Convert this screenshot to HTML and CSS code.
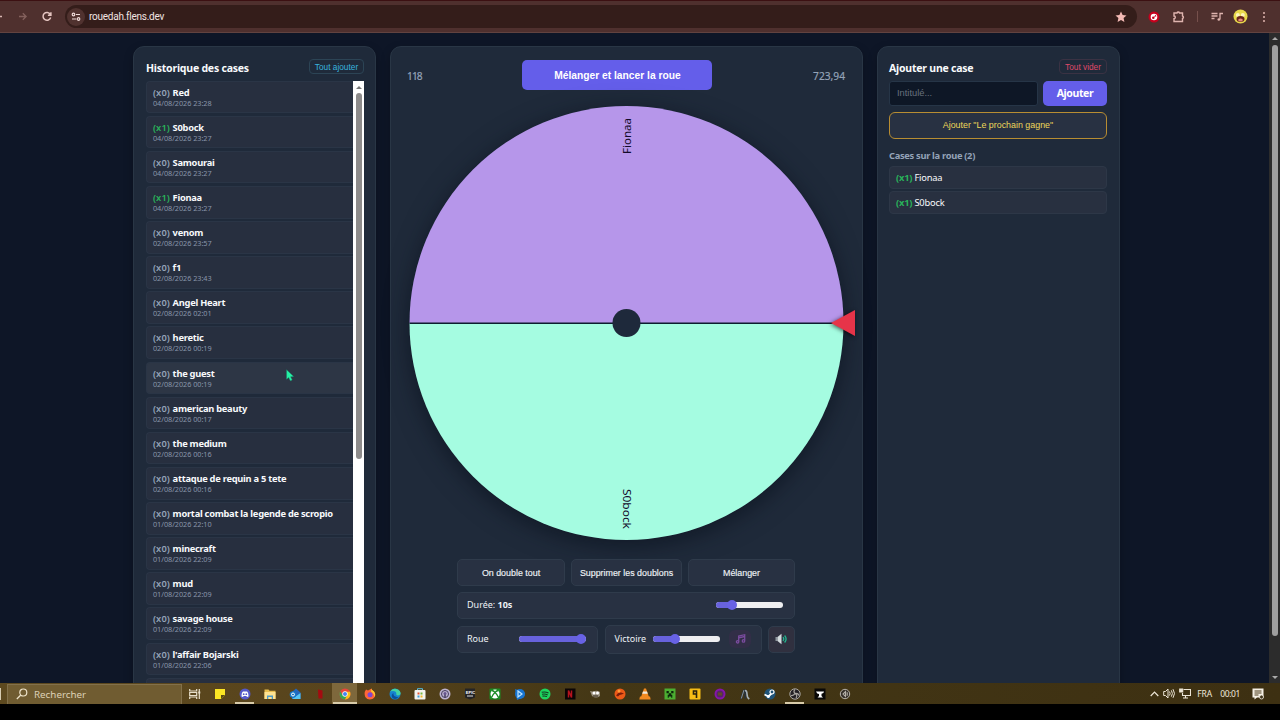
FILE: index.html
```
<!DOCTYPE html>
<html lang="fr">
<head>
  <meta charset="UTF-8">
  <title>rouedah.flens.dev</title>
  <link rel="stylesheet" href="styles.css">
</head>
<body>

<header class="browser-bar">
  <svg class="nav-icons" width="60" height="33" viewBox="0 0 60 33" fill="none" stroke-width="1.3">
    <path d="M-4 16.5H2" stroke="#d9b7b2"/>
    <path d="M19 16.5h7M22.800 13.200l3.300 3.300-3.300 3.300" stroke="#83605c"/>
    <path d="M50.300 14.300A3.900 3.900 0 1 0 50.700 17.500M50.900 12.200v3h-3" stroke="#e5c5c1" stroke-width="1.500"/>
  </svg>
  <div class="address">
    <span class="site-info">
      <svg width="10" height="10" viewBox="0 0 10 10" fill="none" stroke="#f0dcda" stroke-width="1.200">
        <circle cx="2.500" cy="2.500" r="1.300"/><path d="M5 2.500h4M1 7h4"/><circle cx="7.500" cy="7" r="1.300"/>
      </svg>
    </span>
    <span class="url">rouedah.flens.dev</span>
    <svg class="star" width="12" height="12" viewBox="0 0 12 12"><path fill="#f3b9b4" d="M6 .5l1.600 3.500 3.900.4-2.900 2.600.8 3.900L6 8.900l-3.400 2 .8-3.900L.5 4.400l3.900-.4z"/></svg>
  </div>
  <div class="extensions">
    <svg width="12" height="12" viewBox="0 0 12 12"><circle cx="6" cy="6" r="5.500" fill="#c7001d"/><circle cx="6" cy="6" r="3.300" fill="#fff"/><path d="M6 6l1.500-2.300 1 1.500z" fill="#c7001d"/><circle cx="5.300" cy="6.800" r="1.300" fill="#c7001d"/></svg>
    <svg width="13" height="13" viewBox="0 0 13 13" fill="none" stroke="#dfb4af" stroke-width="1.400"><path d="M2 3h3a1.300 1.300 0 0 1 2.500 0h3v3a1.300 1.300 0 0 1 0 2.500v3H2V8.700a1.300 1.300 0 0 0 0-2.700z"/></svg>
    <span class="divider"></span>
    <svg width="12" height="12" viewBox="0 0 12 12" fill="none" stroke="#dfb4af" stroke-width="1.300"><path d="M.5 2.500h6M.5 5h6M.5 7.500h3M9 8.500V2.500h3"/><circle cx="7.800" cy="8.500" r="1.300" fill="#dfb4af" stroke="none"/></svg>
    <svg class="avatar" width="15" height="15" viewBox="0 0 15 15"><circle cx="7.500" cy="7.500" r="7" fill="#e8d94a"/><circle cx="4.800" cy="6" r="2" fill="#fff5bb"/><circle cx="9.800" cy="6" r="2" fill="#fff5bb"/><ellipse cx="7.500" cy="10" rx="4" ry="3" fill="#68251c"/><ellipse cx="7.500" cy="11" rx="2.300" ry="1.500" fill="#e48a7e"/></svg>
    <svg width="4" height="12" viewBox="0 0 4 12" fill="#dfb4af"><circle cx="2" cy="2" r="1"/><circle cx="2" cy="6" r="1"/><circle cx="2" cy="10" r="1"/></svg>
  </div>
</header>

<div class="viewport">
  <main class="page">
    <section class="panel history">
      <div class="panel-head">
        <h2>Historique des cases</h2>
        <button class="btn-small btn-blue">Tout ajouter</button>
      </div>
      <div class="history-scroll">
        <ul class="history-list">
          <li><b><i>(x0)</i> Red</b><time>04/08/2026 23:28</time></li>
          <li><b><i class="on">(x1)</i> S0bock</b><time>04/08/2026 23:27</time></li>
          <li><b><i>(x0)</i> Samourai</b><time>04/08/2026 23:27</time></li>
          <li><b><i class="on">(x1)</i> Fionaa</b><time>04/08/2026 23:27</time></li>
          <li><b><i>(x0)</i> venom</b><time>02/08/2026 23:57</time></li>
          <li><b><i>(x0)</i> f1</b><time>02/08/2026 23:43</time></li>
          <li><b><i>(x0)</i> Angel Heart</b><time>02/08/2026 02:01</time></li>
          <li><b><i>(x0)</i> heretic</b><time>02/08/2026 00:19</time></li>
          <li class="hover"><b><i>(x0)</i> the guest</b><time>02/08/2026 00:19</time></li>
          <li><b><i>(x0)</i> american beauty</b><time>02/08/2026 00:17</time></li>
          <li><b><i>(x0)</i> the medium</b><time>02/08/2026 00:16</time></li>
          <li><b><i>(x0)</i> attaque de requin a 5 tete</b><time>02/08/2026 00:16</time></li>
          <li><b><i>(x0)</i> mortal combat la legende de scropio</b><time>01/08/2026 22:10</time></li>
          <li><b><i>(x0)</i> minecraft</b><time>01/08/2026 22:09</time></li>
          <li><b><i>(x0)</i> mud</b><time>01/08/2026 22:09</time></li>
          <li><b><i>(x0)</i> savage house</b><time>01/08/2026 22:09</time></li>
          <li><b><i>(x0)</i> l'affair Bojarski</b><time>01/08/2026 22:06</time></li>
          <li></li>
        </ul>
        <div class="list-scrollbar"><span class="arrow-up"></span><span class="thumb"></span></div>
      </div>
    </section>

    <section class="panel wheel-panel">
      <div class="wheel-top">
        <span class="count">118</span>
        <button class="btn-primary btn-spin">Mélanger et lancer la roue</button>
        <span>723,94</span>
      </div>
      <svg class="wheel" width="472" height="458" viewBox="0 0 472 458">
        <circle class="wheel-shadow" cx="235.500" cy="229" r="217"/>
        <path d="M18.500 229a217 217 0 0 1 434 0z" fill="#b696ea"/>
        <path d="M18.500 229a217 217 0 0 0 434 0z" fill="#a5fce1"/>
        <path d="M18.500 229.300h434" stroke="#0c1d2f" stroke-width="1.400"/>
        <circle cx="235.500" cy="229" r="14" fill="#1e293b"/>
        <text class="wheel-text" transform="translate(239.500 60) rotate(-90)" textLength="36" lengthAdjust="spacingAndGlyphs">Fionaa</text>
        <text class="wheel-text" transform="translate(231.500 395) rotate(90)" textLength="40" lengthAdjust="spacingAndGlyphs">S0bock</text>
        <path class="pointer" d="M440 229l24-13v26z" fill="#e63449"/>
      </svg>
      <div class="controls">
        <div class="row row-buttons">
          <button class="box">On double tout</button>
          <button class="box">Supprimer les doublons</button>
          <button class="box">Mélanger</button>
        </div>
        <div class="box duration">
          <span>Durée: <b>10s</b></span>
          <div class="slider"><div class="fill" style="width: 24%"></div></div>
        </div>
        <div class="row row-volume">
          <div class="box">
            <span>Roue</span>
            <div class="slider"><div class="fill" style="width: 93%"></div></div>
          </div>
          <div class="box victory">
            <span>Victoire</span>
            <div class="slider"><div class="fill" style="width: 33%"></div></div>
            <div class="music">
              <svg width="11" height="11" viewBox="0 0 11 11" fill="none" stroke="#7a4b9e" stroke-width="1.300"><path d="M3.700 8.500V3l6-1.300v5.800M3.700 4.800l6-1.300"/><circle cx="2.600" cy="8.800" r="1.200"/><circle cx="8.500" cy="7.900" r="1.200"/></svg>
            </div>
          </div>
          <div class="box speaker">
            <svg width="13" height="12" viewBox="0 0 13 12"><path d="M.5 4h2v4h-2z" fill="#8d969d"/><path d="M2.500 4l4-3.300v10.600L2.500 8z" fill="#d5dcdf"/><path d="M8 4.200q1.500 1.800 0 3.600M9.600 2.500q3 3.500 0 7" fill="none" stroke="#23b58e" stroke-width="1.300"/></svg>
          </div>
        </div>
      </div>
    </section>

    <section class="panel add-panel">
      <div class="panel-head">
        <h2>Ajouter une case</h2>
        <button class="btn-small btn-red">Tout vider</button>
      </div>
      <div class="add-form">
        <input type="text" placeholder="Intitulé...">
        <button class="btn-primary">Ajouter</button>
      </div>
      <button class="btn-next">Ajouter "Le prochain gagne"</button>
      <h3>Cases sur la roue (2)</h3>
      <ul class="case-list">
        <li><b>(x1)</b> Fionaa</li>
        <li><b>(x1)</b> S0bock</li>
      </ul>
    </section>
  </main>
  <div class="page-scrollbar"><span class="arrow-up"></span><span class="thumb"></span><span class="arrow-down"></span></div>
</div>

<footer class="taskbar">
  <div class="start"></div>
  <div class="search">
    <svg width="12" height="12" viewBox="0 0 12 12" fill="none" stroke="#eee3ca" stroke-width="1.200"><circle cx="7.300" cy="4.500" r="3.500"/><path d="M4.800 7L.8 11"/></svg>
    <span>Rechercher</span>
  </div>
  <div class="apps">
    <div><svg viewBox="0 0 12 12" fill="none" stroke="#e8e0cc" stroke-width="1.200"><path d="M.7 1v2h7V1M.7 11V9h7v2M.7 4.500h7v3h-7zM10.300 1v10"/><path d="M9.300 4.500h2" stroke-width="2"/></svg></div>
    <div><svg viewBox="0 0 12 12"><path d="M1 1h10v6l-4 4H1z" fill="#fbe524"/><path d="M7 11V7h4z" fill="#5b4a11"/></svg></div>
    <div class="open"><svg viewBox="0 0 12 12"><circle cx="6" cy="6" r="5.500" fill="#5559c9"/><path d="M2.500 8.500Q2.500 4.500 4 3.500h4q1.500 1 1.500 5L8 9l-.7-1H4.700L4 9z" fill="#fff"/><circle cx="4.700" cy="6.200" r=".9" fill="#5559c9"/><circle cx="7.300" cy="6.200" r=".9" fill="#5559c9"/></svg></div>
    <div><svg viewBox="0 0 12 12"><path d="M.5 1.500h4l1 1.300h6V11H.5z" fill="#e8bf50"/><path d="M.5 4h11v7H.5z" fill="#ffe391"/><path d="M3 11V7.500h6V11H7.700V9H4.300v2z" fill="#4d9bc9"/></svg></div>
    <div><svg viewBox="0 0 12 12"><path d="M3 4l4-3.500 4.500 4V11H3z" fill="#2467bd"/><path d="M3 11l8.500-6v6z" fill="#55c5f5"/><circle cx="4" cy="6.500" r="3.300" fill="#1877c9"/><circle cx="4" cy="6.500" r="1.500" fill="none" stroke="#fff"/></svg></div>
    <div><svg viewBox="0 0 12 12"><path d="M4 1.500l4.500 1v8H4.500z" fill="#a50b10"/></svg></div>
    <div class="open active"><svg viewBox="0 0 12 12"><circle cx="6" cy="6" r="5.500" fill="#e7453b"/><path d="M1.200 3.300A5.500 5.500 0 0 0 6 11.500L8.200 7 3.500 7z" fill="#35a853"/><path d="M6 11.500A5.500 5.500 0 0 0 11 3.800H6L8.300 7z" fill="#fbc116"/><circle cx="6" cy="6" r="2.700" fill="#fff"/><circle cx="6" cy="6" r="2" fill="#4285f4"/></svg></div>
    <div><svg viewBox="0 0 12 12"><path d="M2 1.500l2 1Q6 1.500 7.500.5q0 1.500 2.500 3Q13 8 9 10.800 4 13 1.300 9-.4 5 2 1.500z" fill="#ff6638"/><path d="M7.500.5q0 1.500 2.500 3 2 3 .5 5.500Q10 5 7 3.500z" fill="#ffc72c"/><circle cx="6" cy="6.800" r="2.500" fill="#8048cf"/></svg></div>
    <div><svg viewBox="0 0 12 12"><circle cx="6" cy="6" r="5.500" fill="#1583cf"/><path d="M1 4Q4-1 9 1.500q3.500 2 2.300 5-2 1.500-4 .6Q8 3 4 3q-2 0-3 1z" fill="#43d2a4"/><path d="M4.500 5q-1 3.500 5 4.500-3 2.500-6 .5Q1.500 7 4.500 5z" fill="#0b4f99"/></svg></div>
    <div><svg viewBox="0 0 12 12"><rect x=".5" y="2" width="11" height="9.500" rx="1" fill="#f4f4ef"/><path d="M3.500 2V.7h5V2" fill="none" stroke="#58bde0"/><path d="M3.500 4.500h2v2h-2z" fill="#e95431"/><path d="M6.500 4.500h2v2h-2z" fill="#77b843"/><path d="M3.500 7.500h2v2h-2z" fill="#3b9fdd"/><path d="M6.500 7.500h2v2h-2z" fill="#f4b92b"/></svg></div>
    <div><svg viewBox="0 0 12 12"><circle cx="6" cy="6" r="5.500" fill="#bcb2cf"/><circle cx="6" cy="6" r="3.500" fill="none" stroke="#453c60"/><path d="M6 9.500V6" stroke="#453c60" stroke-width="1.500"/><circle cx="6" cy="5.500" r="1.500" fill="#67558d"/></svg></div>
    <div><svg viewBox="0 0 12 12"><path d="M1 .5h10v9L6 11.500 1 9.500z" fill="#242426"/><text x="1.800" y="6" class="epic">EPIC</text><path d="M3 8h6" stroke="#ddd"/></svg></div>
    <div><svg viewBox="0 0 12 12"><rect x=".5" y=".5" width="11" height="11" rx="1" fill="#198b23"/><circle cx="6" cy="6" r="4.500" fill="#fff"/><path d="M2.500 9.500Q4 6 6 4.500 8 6 9.500 9.500M3 2.500Q5 3 6 4.500 7 3 9 2.500" fill="none" stroke="#198b23" stroke-width="1.300"/></svg></div>
    <div><svg viewBox="0 0 12 12"><path d="M1 1l10 4-1 4-7 3z" fill="#1774d1"/><circle cx="6" cy="6" r="5" fill="#1774d1"/><path d="M4 3v6l4-3z" fill="none" stroke="#bde4ff" stroke-width="1.200"/></svg></div>
    <div><svg viewBox="0 0 12 12"><circle cx="6" cy="6" r="5.500" fill="#1ed45f"/><path d="M2.700 4.300q3.500-1 6.800.7M3 6.300q3-.8 5.700.6M3.500 8.100q2.500-.5 4.500.5" fill="none" stroke="#123c21" stroke-width="1.100"/></svg></div>
    <div><svg viewBox="0 0 12 12"><path d="M1 .5h10.500v11H1z" fill="#0b0506"/><path d="M4.500 9.500v-7l3 7v-7" fill="none" stroke="#b5121d" stroke-width="1.500"/></svg></div>
    <div><svg viewBox="0 0 12 12"><path d="M1 3l3 .5q4-1.500 7 .5v4q-4 3-8 0z" fill="#988f7c"/><circle cx="5" cy="5" r="1.500" fill="#fff"/><circle cx="8.500" cy="5" r="1.500" fill="#fff"/><path d="M4 8h5" stroke="#392e23"/></svg></div>
    <div><svg viewBox="0 0 12 12"><circle cx="6" cy="6" r="5.500" fill="#ed5a18"/><path d="M2 7.500q2-3.500 5-3l3 1-2.500 1q-2 0-3.500 2z" fill="#7e1c0a"/><circle cx="5" cy="3" r="1.500" fill="#ff9b38"/></svg></div>
    <div><svg viewBox="0 0 12 12"><path d="M5 .5h2L10 9H2z" fill="#f28920"/><path d="M4 3.500h4l.8 2.300H3.200z" fill="#eee8dc"/><path d="M1 8.500h10l.7 3H.3z" fill="#f28920"/></svg></div>
    <div><svg viewBox="0 0 12 12"><path d="M.5.500h11v11H.5z" fill="#4caf32"/><path d="M2.500 3h2.300v2.300H2.500zM7.200 3h2.300v2.300H7.200zM4.800 5.300h2.400v1.400h1.100v3H7.200V8.500H4.800v1.200H3.700v-3h1.100z" fill="#0c260a"/></svg></div>
    <div><svg viewBox="0 0 12 12"><rect x=".5" y=".5" width="11" height="11" rx="1" fill="#f7bd16"/><path d="M7.500 10V3h-3v3h3" fill="none" stroke="#2b230d" stroke-width="1.600"/></svg></div>
    <div><svg viewBox="0 0 12 12"><circle cx="6" cy="6" r="4.500" fill="#552568" stroke="#8615aa" stroke-width="2"/><path d="M4 4.500h4v3H4z" fill="#654b28"/></svg></div>
    <div><svg viewBox="0 0 12 12" fill="none"><path d="M2 11l2.800-8.500h1.400v8" stroke="#27323c" stroke-width="1.800"/><path d="M2.300 10.500L5 2" stroke="#87939c"/><path d="M6 2.500q2 0 2 3.500t2.300 5" stroke="#a5b0b8" stroke-width="1.600"/></svg></div>
    <div><svg viewBox="0 0 12 12"><circle cx="6" cy="6" r="5.500" fill="#1f5378"/><path d="M.5 6.500l4 2L8 5" stroke="#fff" stroke-width="1.800" fill="none"/><circle cx="8" cy="4" r="2" fill="#1f5378" stroke="#fff" stroke-width="1.200"/><circle cx="4.300" cy="8.500" r="1.500" fill="#fff"/></svg></div>
    <div class="open"><svg viewBox="0 0 12 12" fill="none" stroke="#aaa6a0"><circle cx="6" cy="6" r="5.200" fill="#242125"/><path d="M6 1.500q-2 2 0 4 3-.5 4 2M6 5.500q-1.500 2.500-4 2M6 5.500q3 2 1 4.500" stroke-width="1.200"/></svg></div>
    <div><svg viewBox="0 0 12 12"><path d="M.5.500h11v11H.5z" fill="#090807"/><path d="M2 3.500h8q0 2-2.500 2.300V8L9 9.500H3.500L5 8V6Q3 6 2 3.500z" fill="#fff"/></svg></div>
    <div><svg viewBox="0 0 12 12" fill="none" stroke="#b5b1aa"><circle cx="6" cy="6" r="4.700" fill="#35302b"/><path d="M6.500 3.500v5L4 6zM8.200 4.300v3.400" stroke-width="1.100"/></svg></div>
  </div>
  <div class="tray">
    <svg width="9" height="6" viewBox="0 0 9 6" fill="none" stroke="#ece5d6" stroke-width="1.200"><path d="M.7 5l3.800-4 3.800 4"/></svg>
    <svg width="12" height="11" viewBox="0 0 12 11" fill="none" stroke="#ece5d6"><path d="M.7 3.500h1.800L5 1v9L2.500 7.500H.7zM6.500 3.500q1.300 2 0 4M8.300 2.300q2.200 3.200 0 6.400M10 1.200q3 4.300 0 8.600"/></svg>
    <svg width="12" height="11" viewBox="0 0 12 11" fill="none" stroke="#ece5d6" stroke-width="1.100"><path d="M4.500 1.500h7v6h-8V5M6.500 7.500v2.500M4 10h5"/><path d="M.7 1h3v3h-3z" fill="#ece5d6"/></svg>
    <span class="lang">FRA</span>
    <span class="clock">00:01</span>
    <svg width="12" height="12" viewBox="0 0 12 12"><path d="M.5.500h11v9H5l-2.500 2v-2h-2z" fill="#f5f0e5"/><path d="M2.500 3h7M2.500 5h7M2.500 7h4" stroke="#4a3a1b"/><circle cx="9.500" cy="9" r="2" fill="#40351c" stroke="#f5f0e5" stroke-width=".8"/></svg>
  </div>
</footer>
<div class="letterbox"></div>

<svg class="cursor" width="8" height="13" viewBox="0 0 8 13"><path d="M.6.700v9.600l2.100-1.900 1.600 3.400 1.900-.8-1.600-3.200 3-.3z" fill="#25f2a5" stroke="#1d8a6c" stroke-width=".4"/></svg>

</body>
</html>
```
FILE: styles.css
```
* {
  box-sizing: border-box;
}

body {
  margin: 0;
  width: 1280px;
  height: 720px;
  overflow: hidden;
  display: flex;
  flex-direction: column;
  background: #000;
  color: #f8fafc;
  font-family: "Noto Sans", "Open Sans", sans-serif;
  font-size: 9px;
}

svg {
  display: block;
  flex: none;
}

button {
  font-family: "Liberation Sans", Arial, sans-serif;
  padding: 0;
  border: 0;
  white-space: nowrap;
}

ul {
  list-style: none;
  margin: 0;
  padding: 0;
}

/* browser */
.browser-bar {
  height: 33px;
  flex: none;
  display: flex;
  align-items: center;
  background: #4f302e;
  border-top: 1px solid #3c1012;
  border-bottom: 1px solid #624340;
  padding-right: 14px;
}

.nav-icons {
  margin-right: 5px;
}

.address {
  width: 1072px;
  height: 23px;
  border-radius: 12px;
  background: #341d1a;
  display: flex;
  align-items: center;
  padding: 0 10px 0 2px;
}

.site-info {
  width: 18px;
  height: 18px;
  border-radius: 50%;
  background: #50322f;
  display: flex;
  align-items: center;
  justify-content: center;
}

.url {
  margin-left: 4px;
  font-family: Roboto, sans-serif;
  font-size: 10px;
  letter-spacing: -0.25px;
  color: #f2e4e2;
}

.star {
  margin-left: auto;
}

.extensions {
  flex: 1;
  display: flex;
  align-items: center;
  justify-content: space-between;
  margin-left: 11px;
}

.avatar {
  margin: 0 2px 0 -2px;
}

.divider {
  width: 1px;
  height: 11px;
  background: #76504c;
}

/* page */
.viewport {
  height: 650px;
  flex: none;
  display: flex;
  background: #0e1627;
  overflow: hidden;
}

.page {
  flex: 1;
  display: grid;
  grid-template-columns: 243px 473px 243px;
  gap: 14px;
  padding: 13px 0 0 133px;
}

.panel {
  height: 660px;
  background: #1f2a3a;
  border: 1px solid #293645;
  border-radius: 11px;
  box-shadow: 0 4px 10px rgba(0, 0, 0, 0.25);
}

.history {
  padding: 12px 11px 0 12px;
}

.add-panel {
  padding: 12px 12px 0 11px;
}

.panel-head {
  height: 21.500px;
  display: flex;
  justify-content: space-between;
  align-items: flex-start;
}

h2 {
  margin: 1.500px 0 0;
  font-size: 10.500px;
  line-height: 14px;
  letter-spacing: -0.22px;
}

.btn-small {
  height: 15px;
  border: 1px solid #2c4455;
  border-radius: 4px;
  background: transparent;
  font-size: 8.300px;
  line-height: 12px;
}

.btn-blue {
  width: 55px;
  color: #38b2df;
}

.btn-red {
  width: 48px;
  color: #df4968;
  border-color: #3a3243;
}

.history-scroll {
  height: 640px;
  display: flex;
}

.history-list {
  flex: 1;
}

.history-list li {
  height: 32.630px;
  margin-bottom: 2.500px;
  padding: 4px 0 0 6px;
  background: #272f3f;
  border: 1px solid #2a3546;
  border-right: 0;
  border-radius: 4px 0 0 4px;
  white-space: nowrap;
}

.history-list li.hover {
  background: #2d3645;
}

.history-list b {
  display: block;
  font-size: 9.300px;
  line-height: 13px;
  letter-spacing: -0.26px;
}

.history-list i {
  font-style: normal;
  font-weight: 600;
  letter-spacing: 0.1px;
  margin-right: 0.5px;
  color: #94a3b8;
}

.history-list i.on,
.case-list b {
  color: #29b35a;
}

.history-list time {
  display: block;
  font-size: 7.300px;
  line-height: 9px;
  letter-spacing: -0.05px;
  color: #8996aa;
}

.list-scrollbar {
  width: 11px;
  background: #fff;
  display: flex;
  flex-direction: column;
  align-items: center;
  padding-top: 5px;
}

.arrow-up,
.arrow-down {
  border: 3px solid transparent;
}

.arrow-up {
  border-bottom-color: #777;
  border-top-width: 0;
}

.arrow-down {
  border-top-color: #aaa;
  border-bottom-width: 0;
}

.list-scrollbar .thumb {
  width: 6px;
  height: 366px;
  margin-top: 4px;
  border-radius: 3px;
  background: #8d8b8b;
}

.page-scrollbar {
  width: 11px;
  background: #2c2c2c;
  display: flex;
  flex-direction: column;
  align-items: center;
  padding: 4px 0;
}

.page-scrollbar .arrow-up {
  border-bottom-color: #aaa;
}

.page-scrollbar .thumb {
  width: 6px;
  height: 591px;
  margin-top: 5px;
  border-radius: 3px;
  background: #9f9f9f;
}

.page-scrollbar .arrow-down {
  margin-top: auto;
}

/* wheel */
.wheel-panel {
  display: flex;
  flex-direction: column;
  align-items: center;
}

.wheel-top {
  width: 100%;
  height: 47px;
  padding: 13px 17px 0 16px;
  display: flex;
  justify-content: space-between;
  font-size: 10.200px;
  line-height: 32px;
  color: #94a3b8;
  -webkit-text-stroke: 0.2px;
}

.wheel-top .count {
  letter-spacing: -0.9px;
}

.btn-primary {
  background: #645eea;
  color: #fff;
  font-weight: bold;
  border-radius: 5px;
}

.btn-spin {
  width: 190px;
  height: 30px;
  font-size: 10.250px;
  -webkit-text-stroke: 0;
}

.wheel {
  margin-left: 1px;
  overflow: visible;
}

.wheel-shadow {
  fill: #1c2735;
  filter: drop-shadow(0 5px 12px rgba(5, 12, 24, 0.6));
}

.wheel-text {
  font-size: 11.500px;
  fill: #130b2b;
}

.pointer {
  filter: drop-shadow(-1px 1px 2px rgba(0, 0, 0, 0.6));
}

.controls {
  width: 338px;
  margin: 7px 0 0 -1px;
  display: flex;
  flex-direction: column;
  gap: 6px;
}

.row {
  display: grid;
  align-items: center;
}

.row-buttons {
  grid-template-columns: 108px 111px 107px;
  gap: 6px;
}

.row-volume {
  grid-template-columns: 141px 157px 27px;
  gap: 6.500px;
}

.box {
  height: 27px;
  background: #283142;
  border: 1px solid #2f3b4b;
  border-radius: 5px;
  color: #eef2f6;
  font-size: 9px;
}

button.box {
  font-size: 8.900px;
  -webkit-text-stroke: 0.15px;
}

div.box {
  display: flex;
  align-items: center;
  justify-content: space-between;
  padding: 0 11px 1px 9px;
}

div.box.duration {
  height: 26.500px;
}

.slider {
  width: 67px;
  height: 6px;
  border-radius: 3px;
  background: #eeeef0;
}

.fill {
  position: relative;
  height: 6px;
  border-radius: 3px;
  background: #6862dc;
}

.fill::after {
  content: "";
  position: absolute;
  right: -5px;
  top: -2px;
  width: 10px;
  height: 10px;
  border-radius: 50%;
  background: #6862e5;
}

div.box.victory {
  height: 29px;
  padding: 0 9px 1px;
}

.victory .slider {
  margin-left: -3px;
}

.music {
  width: 22px;
  height: 18px;
  border-radius: 6px;
  background: #322e47;
  display: flex;
  align-items: center;
  justify-content: center;
}

div.box.speaker {
  padding: 0;
  justify-content: center;
  background: #30303f;
}

/* right panel */
.add-form {
  display: grid;
  grid-template-columns: 149px 64px;
  gap: 5px;
  align-items: center;
}

.add-form input {
  width: 100%;
  height: 25px;
  padding: 0 7px;
  background: #0e1726;
  border: 1px solid #263547;
  border-radius: 3px;
  font-family: "Liberation Sans", Arial, sans-serif;
  font-size: 9.300px;
}

.add-form input::placeholder {
  color: #68717d;
}

.add-form button {
  height: 25px;
  font-family: "Noto Sans", "Open Sans", sans-serif;
  font-size: 10.500px;
  letter-spacing: -0.4px;
}

.btn-next {
  width: 100%;
  height: 27px;
  margin-top: 6px;
  border: 1px solid #b88d32;
  border-radius: 6px;
  background: #283142;
  color: #edd75a;
  font-size: 8.900px;
}

h3 {
  margin: 10px 0 4px;
  font-size: 9.300px;
  line-height: 13px;
  letter-spacing: -0.3px;
  color: #94a3b8;
}

.case-list li {
  height: 23px;
  margin-bottom: 2px;
  padding-left: 6px;
  line-height: 21px;
  font-size: 9.300px;
  letter-spacing: -0.2px;
  background: #283040;
  border: 1px solid #2d3747;
  border-radius: 4px;
}

/* taskbar */
.taskbar {
  height: 21px;
  flex: none;
  display: flex;
  align-items: center;
  background: linear-gradient(90deg, #5d491f 0, #58441c 350px, #443715 600px, #3d3012 100%);
}

.start {
  width: 1px;
  height: 12px;
  margin-right: 6px;
  background: #d6cbb0;
}

.search {
  width: 175px;
  height: 20px;
  display: flex;
  align-items: center;
  padding-left: 8px;
  gap: 6px;
  background: #705c31;
  border: 1px solid #82704a;
  border-bottom: 0;
  color: #ddd1b6;
  font-size: 9.800px;
}

.apps {
  display: flex;
}

.apps div {
  width: 25px;
  height: 21px;
  display: flex;
  align-items: center;
  justify-content: center;
}

.apps svg {
  width: 12px;
  height: 12px;
}

.apps .open {
  background: linear-gradient(#d8cba9, #d8cba9) center bottom / 19px 2px no-repeat;
}

.apps .active {
  background: linear-gradient(#d8cba9, #d8cba9) center bottom / 24px 2px no-repeat, #7e683c;
}

.epic {
  font-family: "Liberation Sans", sans-serif;
  font-size: 4px;
  font-weight: bold;
  fill: #fff;
}

.tray {
  margin-left: auto;
  display: flex;
  align-items: center;
  padding-right: 16px;
  gap: 4px;
  font-size: 8.500px;
  color: #f0e9dc;
}

.lang {
  margin-left: 2px;
}

.clock {
  margin: 0 8px 0 4px;
  letter-spacing: -0.4px;
}

.letterbox {
  height: 16px;
  background: #000;
}

.cursor {
  position: absolute;
  left: 285.500px;
  top: 368.500px;
}
```
